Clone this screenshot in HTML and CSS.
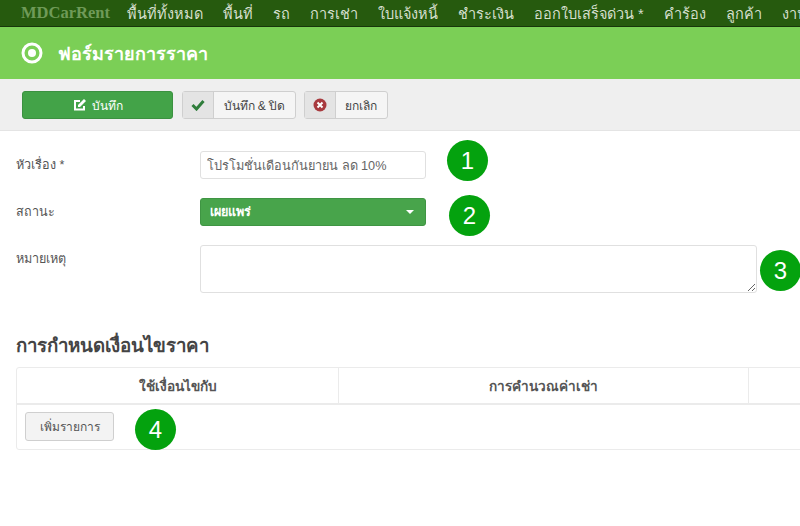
FILE: index.html
```html
<!DOCTYPE html>
<html lang="th">
  <head>
    <meta charset="UTF-8" />
    <title>ฟอร์มรายการราคา</title>
    <link rel="stylesheet" href="styles.css">
  </head>
  <body>
    <nav class="navbar">
      <a class="brand">MDCarRent</a>
      <a>พื้นที่ทั้งหมด</a>
      <a>พื้นที่</a>
      <a>รถ</a>
      <a>การเช่า</a>
      <a>ใบแจ้งหนี้</a>
      <a>ชำระเงิน</a>
      <a>ออกใบเสร็จด่วน *</a>
      <a>คำร้อง</a>
      <a>ลูกค้า</a>
      <a>งาน</a>
    </nav>

    <header class="page-title">
      <svg class="title-icon" width="22" height="22" viewBox="0 0 22 22">
        <circle cx="11" cy="11" r="9" fill="none" stroke="#fff" stroke-width="3" />
        <circle cx="11" cy="11" r="4" fill="#fff" />
      </svg>
      <h1>ฟอร์มรายการราคา</h1>
    </header>

    <div class="toolbar">
      <button class="btn-save">
        <svg width="14" height="14" viewBox="0 0 14 14">
          <path d="M11 8v3.5H2V3h5" fill="none" stroke="#fff" stroke-width="2" />
          <path d="M5 7l6-6 2 2-6 6H5z" fill="#fff" />
        </svg>
        บันทึก
      </button>
      <button class="btn-group">
        <span class="btn-icon">
          <svg width="14" height="12" viewBox="0 0 14 12">
            <path d="M1.5 6l4 4 7-8" fill="none" stroke="#2f7d3b" stroke-width="3" />
          </svg>
        </span>
        <span class="btn-text">บันทึก &amp; ปิด</span>
      </button>
      <button class="btn-group">
        <span class="btn-icon">
          <svg width="14" height="14" viewBox="0 0 14 14">
            <circle cx="7" cy="7" r="6.5" fill="#a83a3f" />
            <path d="M4.5 4.5l5 5M9.5 4.5l-5 5" stroke="#fff" stroke-width="2" />
          </svg>
        </span>
        <span class="btn-text">ยกเลิก</span>
      </button>
    </div>

    <form class="form">
      <div class="row row-title">
        <label>หัวเรื่อง *</label>
        <input class="field-input" type="text" value="โปรโมชั่นเดือนกันยายน ลด 10%">
        <span class="marker marker-1">1</span>
      </div>
      <div class="row row-status">
        <label>สถานะ</label>
        <div class="field-select">
          <span>เผยแพร่</span>
          <i class="caret"></i>
        </div>
        <span class="marker marker-2">2</span>
      </div>
      <div class="row row-note">
        <label>หมายเหตุ</label>
        <textarea class="field-note"></textarea>
        <span class="marker marker-3">3</span>
      </div>
    </form>

    <section class="rules">
      <h2>การกำหนดเงื่อนไขราคา</h2>
      <div class="rules-table">
        <div class="table-head">
          <div class="col-1">ใช้เงื่อนไขกับ</div>
          <div class="col-2">การคำนวณค่าเช่า</div>
          <div class="col-3"></div>
        </div>
        <div class="table-foot">
          <button class="btn-add" type="button">เพิ่มรายการ</button>
          <span class="marker marker-4">4</span>
        </div>
      </div>
    </section>
  </body>
</html>
```

FILE: styles.css
```css
html,
body {
  margin: 0;
  padding: 0;
  height: 526px;
  overflow: hidden;
}
body {
  background: #fff;
  color: #555;
  font-family: "Liberation Sans", "Noto Sans", sans-serif;
  font-size: 12px;
  position: relative;
}
button {
  font-family: inherit;
}

.navbar {
  height: 26px;
  background: #265a0e;
  border-bottom: 1px solid #17360a;
  display: flex;
  align-items: center;
  gap: 20px;
  padding-left: 21px;
  font-size: 14.5px;
  color: #d5dfcd;
  white-space: nowrap;
  overflow: hidden;
}
.brand {
  font-family: "Liberation Serif", serif;
  font-weight: bold;
  font-size: 16.5px;
  color: #6f9a58;
  margin-right: -3px;
}

.page-title {
  height: 52px;
  background: #7bcf56;
  display: flex;
  align-items: center;
  gap: 15px;
  padding-left: 21px;
}
.page-title h1 {
  margin: 0;
  font-size: 18px;
  font-weight: bold;
  color: #fff;
}

.toolbar {
  height: 52px;
  box-sizing: border-box;
  background: #efefef;
  border-bottom: 1px solid #e4e4e4;
  display: flex;
  align-items: center;
  gap: 8px;
  padding: 1px 0 0 22px;
}
.btn-save {
  width: 151px;
  height: 28px;
  margin-right: 1px;
  background: #43a348;
  border: 1px solid #3b9140;
  border-radius: 3px;
  color: #fff;
  font-size: 12px;
  display: flex;
  align-items: center;
  justify-content: center;
  gap: 5px;
  padding: 0;
}
.btn-group {
  height: 28px;
  padding: 0;
  display: flex;
  background: #f5f5f5;
  border: 1px solid #cfcfcf;
  border-radius: 3px;
  color: #444;
  font-size: 12px;
}
.btn-icon {
  width: 30px;
  background: #e4e4e4;
  border-right: 1px solid #cfcfcf;
  display: flex;
  align-items: center;
  justify-content: center;
}
.btn-text {
  padding: 0 9.5px;
  display: flex;
  align-items: center;
}

.form {
  padding: 20px 0 0 16px;
}
.row {
  display: flex;
  position: relative;
}
.row label {
  width: 184px;
  flex: none;
  font-size: 12.6px;
  color: #555;
  padding-top: 4px;
}
.row-title {
  height: 47px;
}
.row-status {
  height: 47px;
}
.field-input {
  width: 226px;
  height: 28px;
  box-sizing: border-box;
  border: 1px solid #e0e0e0;
  border-radius: 3px;
  padding: 0 6px;
  font-family: inherit;
  font-size: 12.7px;
  color: #666;
}
.field-select {
  width: 226px;
  height: 28px;
  box-sizing: border-box;
  background: #48a44b;
  border: 1px solid #3f9543;
  border-radius: 3px;
  color: #fff;
  font-size: 12.6px;
  font-weight: bold;
  display: flex;
  align-items: center;
  justify-content: space-between;
  padding: 0 11px 0 9px;
}
.caret {
  width: 0;
  height: 0;
  border-left: 4px solid transparent;
  border-right: 4px solid transparent;
  border-top: 4px solid #fff;
}
.field-note {
  width: 557px;
  height: 48px;
  box-sizing: border-box;
  border: 1px solid #e0e0e0;
  border-radius: 3px;
  margin: 0;
}

.marker {
  position: absolute;
  width: 41px;
  height: 41px;
  border-radius: 50%;
  background: #04a20e;
  color: #fff;
  font-size: 24px;
  display: flex;
  align-items: center;
  justify-content: center;
}
.marker-1 {
  left: 431px;
  top: -11px;
}
.marker-2 {
  left: 433px;
  top: -3px;
}
.marker-3 {
  left: 744px;
  top: 5px;
}
.marker-4 {
  left: 118px;
  top: 4px;
}

.rules {
  margin-top: 38px;
  padding-left: 16px;
  overflow: hidden;
}
.rules h2 {
  margin: 0 0 7px;
  font-size: 18.7px;
  font-weight: bold;
  color: #444;
}
.rules-table {
  width: 900px;
  border: 1px solid #ebebeb;
  border-radius: 3px;
}
.table-head {
  display: flex;
  height: 35px;
  border-bottom: 2px solid #ebebeb;
  font-size: 13.6px;
  font-weight: bold;
  color: #555;
}
.table-head > div {
  display: flex;
  align-items: center;
  justify-content: center;
  box-sizing: border-box;
  border-right: 1px solid #ebebeb;
}
.col-1 {
  width: 322px;
}
.col-2 {
  width: 410px;
}
.col-3 {
  flex: 1;
}
.table-foot {
  position: relative;
  height: 44px;
  padding: 7px 0 0 8px;
  box-sizing: border-box;
}
.btn-add {
  width: 89px;
  height: 29px;
  background: #f3f3f3;
  border: 1px solid #cfcfcf;
  border-radius: 3px;
  color: #555;
  font-size: 12px;
  padding: 0;
}
```
